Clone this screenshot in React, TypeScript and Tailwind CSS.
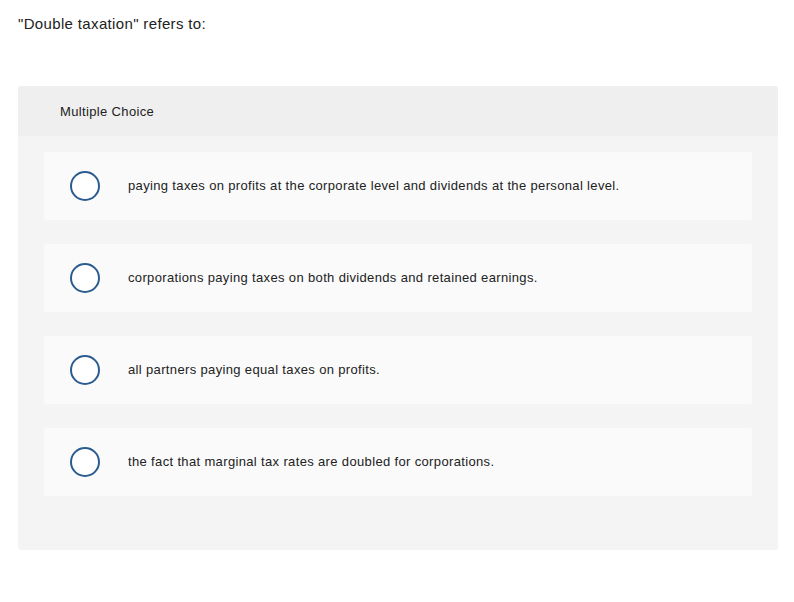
import React from 'react';

const choices = [
  'paying taxes on profits at the corporate level and dividends at the personal level.',
  'corporations paying taxes on both dividends and retained earnings.',
  'all partners paying equal taxes on profits.',
  'the fact that marginal tax rates are doubled for corporations.',
];

const App: React.FC = () => {
  return (
    <div
      className="min-h-screen w-[794px] bg-white text-[#222]"
      style={{ fontFamily: '"Liberation Sans", Arial, sans-serif' }}
    >
      <div className="px-[18px] pt-[14px]">
        <p className="text-[15px] leading-[20px] tracking-[0.35px] text-[#222]">"Double taxation" refers to:</p>

        <div className="mt-[52px] w-[760px] rounded-[3px] bg-[#f4f4f4] overflow-hidden">
          {/* Header */}
          <div className="h-[50px] bg-[#efefef] flex items-center pl-[42px] pt-[1px]">
            <span className="text-[13px] tracking-[0.35px] text-[#222]">Multiple Choice</span>
          </div>

          {/* Options */}
          <div className="flex flex-col gap-[24px] px-[26px] pt-[16px] pb-[54px]">
            {choices.map((c, i) => (
              <div
                key={i}
                className="h-[68px] rounded-[3px] bg-[#fafafa] flex items-center pl-[26px]"
              >
                <div className="w-[30px] h-[30px] rounded-full border-2 border-[#2b5c90] bg-white shrink-0" />
                <span className="ml-[28px] text-[13px] tracking-[0.35px] text-[#222]">{c}</span>
              </div>
            ))}
          </div>
        </div>
      </div>
    </div>
  );
};

export default App;
